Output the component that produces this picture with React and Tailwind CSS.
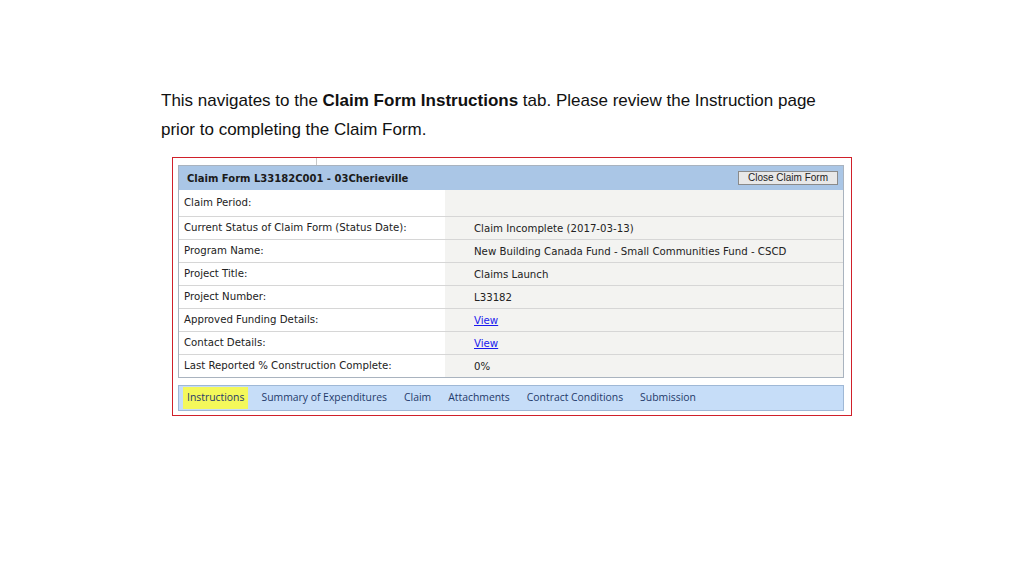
import React from 'react';

const rows = [
  { label: 'Claim Period:', value: '' },
  { label: 'Current Status of Claim Form (Status Date):', value: 'Claim Incomplete (2017-03-13)' },
  { label: 'Program Name:', value: 'New Building Canada Fund - Small Communities Fund - CSCD' },
  { label: 'Project Title:', value: 'Claims Launch' },
  { label: 'Project Number:', value: 'L33182' },
  { label: 'Approved Funding Details:', value: 'View', link: true },
  { label: 'Contact Details:', value: 'View', link: true },
  { label: 'Last Reported % Construction Complete:', value: '0%' },
];

const tabs = ['Instructions', 'Summary of Expenditures', 'Claim', 'Attachments', 'Contract Conditions', 'Submission'];

export default function App() {
  return (
    <div className="w-[1024px] h-[576px] bg-white overflow-hidden">
      <p className="pl-[161px] pt-[86px] text-[17px] leading-[29px] text-[#111] font-['Liberation_Sans',Arial,sans-serif]">
        This navigates to the <span className="font-bold">Claim Form Instructions</span> tab. Please review the Instruction page
        <br />
        prior to completing the Claim Form.
      </p>

      <div className="ml-[172px] mt-[13px] w-[680px] h-[259px] border border-[#d0202a] pl-[5px] font-['DejaVu_Sans',Verdana,sans-serif]">
        {/* strip above the form */}
        <div className="h-[7px] flex">
          <div className="ml-[138px] w-px h-full bg-[#c8c8c8]" />
        </div>

        <div className="w-[666px] border border-[#a9b3bf]">
          <div className="h-[24px] bg-[#aac6e6] flex items-center justify-between pl-[8px] pr-[5px]">
            <span className="text-[10px] font-bold text-[#1a1a1a]">Claim Form L33182C001 - 03Cherieville</span>
            <button className="h-[14px] w-[100px] bg-[#e8e8e8] border border-[#8a8a8a] text-[10px] leading-none text-[#222] font-['Liberation_Sans',Arial,sans-serif]">
              Close Claim Form
            </button>
          </div>
          {rows.map((r, i) => (
            <div
              key={r.label}
              className={`flex text-[10.2px] text-[#222] ${i === 0 ? 'h-[26px]' : 'h-[23px]'} ${i > 0 ? 'border-t border-[#d6d6d6]' : ''}`}
            >
              <div className="w-[266px] bg-white pl-[5px] flex items-center">{r.label}</div>
              <div className="flex-1 bg-[#f3f3f1] pl-[29px] flex items-center pt-[2px]">
                {r.link ? <span className="text-[#1a1aee] underline">{r.value}</span> : r.value}
              </div>
            </div>
          ))}
        </div>

        <div className="mt-[7px] w-[666px] h-[26px] bg-[#c6ddf8] border border-[#9fb8d6] flex items-center gap-[17px] pl-[4px] text-[10.4px] text-[#1f3a6a] font-['Open_Sans',sans-serif]">
          {tabs.map((t, i) => (
            <span
              key={t}
              className={i === 0 ? 'bg-[#f4f85a] px-[4px] h-[22px] flex items-center -mr-[4px]' : ''}
            >
              {t}
            </span>
          ))}
        </div>
      </div>
    </div>
  );
}
